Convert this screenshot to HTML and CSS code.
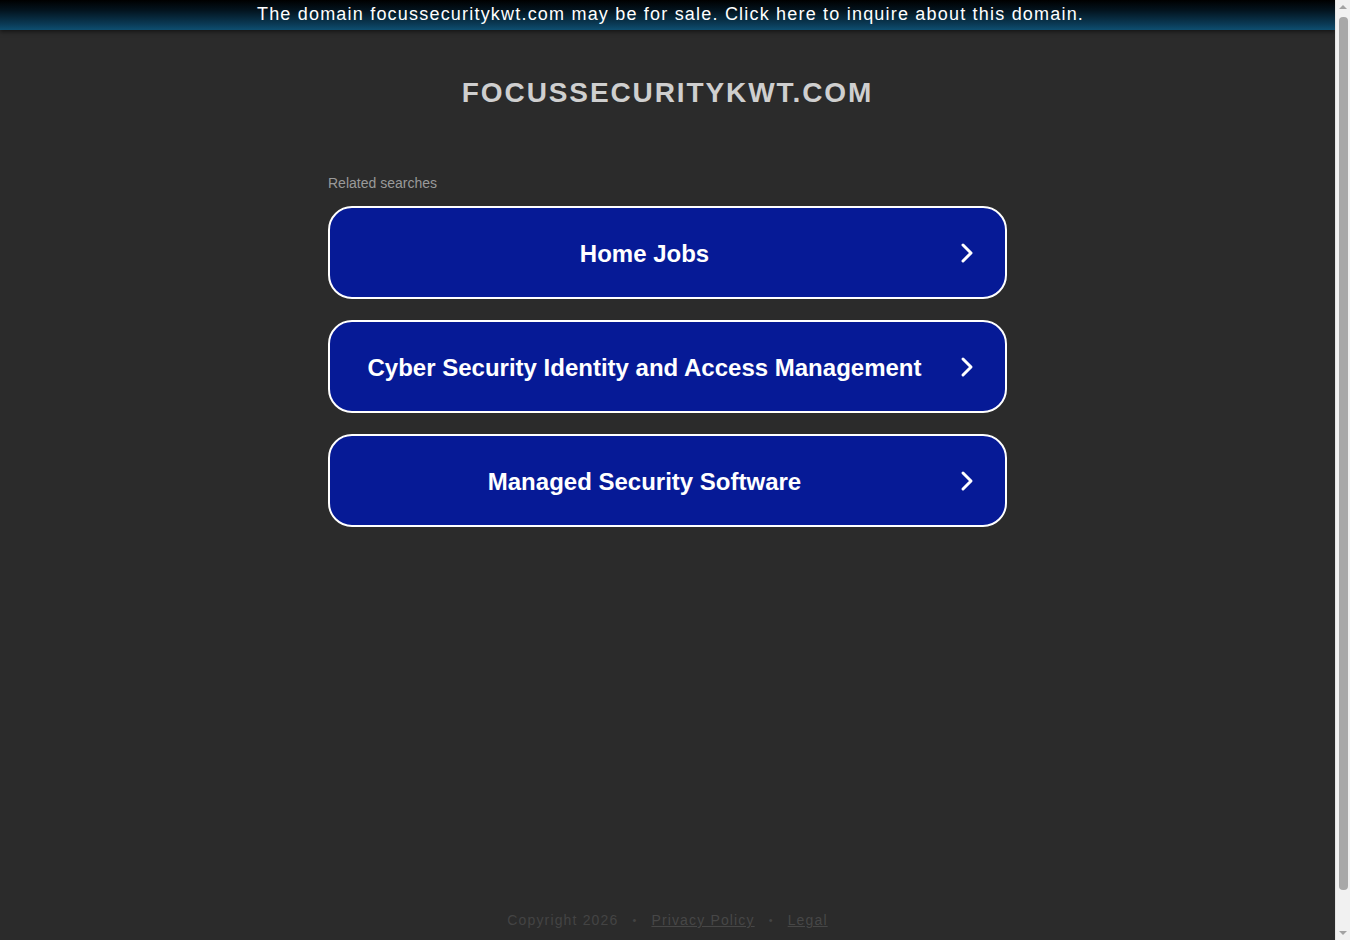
FILE: index.html
```html
<!DOCTYPE html>
<html lang="en">
<head>
  <meta charset="UTF-8" />
  <title>focussecuritykwt.com</title>
  <meta name="viewport" content="width=device-width, initial-scale=1.0"/>
  <link rel="stylesheet" href="styles.css">
</head>
<body>

  <div class="window">
    <div class="viewport">

      <!-- sale banner -->
      <div class="banner">
        <a href="#">The domain focussecuritykwt.com may be for sale. Click here to inquire about this domain.</a>
      </div>

      <div class="page">
        <h1 class="domain">FOCUSSECURITYKWT.COM</h1>

        <div class="searches">
          <p class="label">Related searches</p>

          <a class="search" href="#">
            <span class="text">Home Jobs</span>
            <svg class="arrow" viewBox="0 0 16 24" width="16" height="24"><path d="M4 4 L12 12 L4 20" fill="none" stroke="#fff" stroke-width="3" stroke-linecap="round" stroke-linejoin="round"/></svg>
          </a>
          <a class="search" href="#">
            <span class="text">Cyber Security Identity and Access Management</span>
            <svg class="arrow" viewBox="0 0 16 24" width="16" height="24"><path d="M4 4 L12 12 L4 20" fill="none" stroke="#fff" stroke-width="3" stroke-linecap="round" stroke-linejoin="round"/></svg>
          </a>
          <a class="search" href="#">
            <span class="text">Managed Security Software</span>
            <svg class="arrow" viewBox="0 0 16 24" width="16" height="24"><path d="M4 4 L12 12 L4 20" fill="none" stroke="#fff" stroke-width="3" stroke-linecap="round" stroke-linejoin="round"/></svg>
          </a>
        </div>

        <div class="footer">
          <span>Copyright 2026</span>
          <span class="dot">&bull;</span>
          <a href="#">Privacy Policy</a>
          <span class="dot">&bull;</span>
          <a href="#">Legal</a>
        </div>
      </div>
    </div>

    <!-- scrollbar as seen in the screenshot -->
    <div class="scrollbar">
      <span class="up"></span>
      <span class="thumb"></span>
      <span class="down"></span>
    </div>
  </div>

</body>
</html>
```

FILE: styles.css
```css
body, html {
  margin: 0;
  padding: 0;
  height: 100%;
  overflow: hidden;
  font-family: Arial, "Liberation Sans", sans-serif;
  background-color: #2b2b2b;
  color: white;
}

.window {
  height: 940px;
  display: flex;
}

.viewport {
  flex: 1;
  display: flex;
  flex-direction: column;
  min-width: 0;
}

.banner {
  height: 30px;
  flex: none;
  background: linear-gradient(to bottom, #000 0%, #03141f 35%, #0a3a55 80%, #0e4f70 100%);
  box-shadow: 0 2px 4px rgba(0, 0, 0, 0.5);
  text-align: center;
}

.banner a {
  display: block;
  padding-left: 6px;
  line-height: 28px;
  font-size: 18px;
  letter-spacing: 1.2px;
  color: white;
  text-decoration: none;
}

.page {
  flex: 1;
  display: flex;
  flex-direction: column;
  align-items: center;
}

.domain {
  margin: 47px 0 0;
  font-size: 28px;
  line-height: 32px;
  letter-spacing: 1.9px;
  color: #cfcfcf;
}

.searches {
  width: 679px;
  margin-top: 66px;
  display: flex;
  flex-direction: column;
  gap: 21px;
}

.label {
  margin: 0 0 -7px;
  font-size: 14px;
  line-height: 17px;
  color: #9a9a9a;
}

.search {
  height: 89px;
  display: flex;
  align-items: center;
  padding: 0 30px 0 0;
  background-color: #061a96;
  border: 2px solid #fff;
  border-radius: 24px;
  text-decoration: none;
  color: white;
}

.search .text {
  flex: 1;
  padding-top: 3px;
  text-align: center;
  font-size: 24px;
  font-weight: bold;
}

.search .arrow {
  flex: none;
}

.footer {
  margin-top: auto;
  margin-bottom: 11px;
  display: flex;
  gap: 14px;
  font-size: 14px;
  line-height: 17px;
  letter-spacing: 1.15px;
  color: #444;
}

.footer a {
  color: #474747;
}

.dot {
  font-size: 11px;
}

.scrollbar {
  width: 15px;
  flex: none;
  display: flex;
  flex-direction: column;
  align-items: center;
  background-color: #f1f1f1;
  border-left: 1px solid #e4e4e4;
  box-sizing: border-box;
}

.scrollbar .up,
.scrollbar .down {
  width: 0;
  height: 0;
  margin: 5px 0;
  border-left: 4px solid transparent;
  border-right: 4px solid transparent;
}

.scrollbar .up {
  border-bottom: 4px solid #a3a3a3;
}

.scrollbar .down {
  border-top: 4px solid #a3a3a3;
}

.scrollbar .thumb {
  width: 9px;
  flex: 1;
  margin: 3px 0 36px;
  border-radius: 4px;
  background-color: #a8a8a8;
}
```
